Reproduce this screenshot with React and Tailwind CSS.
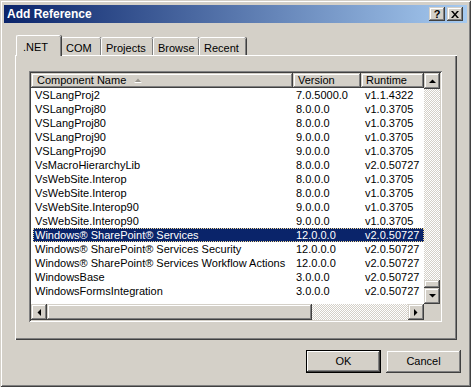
import React from "react";

const raised =
  "shadow-[inset_-1px_-1px_#404040,inset_1px_1px_#d4d0c8,inset_-2px_-2px_#808080,inset_2px_2px_#fff]";
const checker =
  "bg-[repeating-conic-gradient(#fff_0_25%,#d4d0c8_0_50%)] bg-[length:2px_2px]";

const rows = [
  ["VSLangProj2", "7.0.5000.0", "v1.1.4322"],
  ["VSLangProj80", "8.0.0.0", "v1.0.3705"],
  ["VSLangProj80", "8.0.0.0", "v1.0.3705"],
  ["VSLangProj90", "9.0.0.0", "v1.0.3705"],
  ["VSLangProj90", "9.0.0.0", "v1.0.3705"],
  ["VsMacroHierarchyLib", "8.0.0.0", "v2.0.50727"],
  ["VsWebSite.Interop", "8.0.0.0", "v1.0.3705"],
  ["VsWebSite.Interop", "8.0.0.0", "v1.0.3705"],
  ["VsWebSite.Interop90", "9.0.0.0", "v1.0.3705"],
  ["VsWebSite.Interop90", "9.0.0.0", "v1.0.3705"],
  ["Windows® SharePoint® Services", "12.0.0.0", "v2.0.50727"],
  ["Windows® SharePoint® Services Security", "12.0.0.0", "v2.0.50727"],
  ["Windows® SharePoint® Services Workflow Actions", "12.0.0.0", "v2.0.50727"],
  ["WindowsBase", "3.0.0.0", "v2.0.50727"],
  ["WindowsFormsIntegration", "3.0.0.0", "v2.0.50727"],
];

const tabs = [
  { label: ".NET", w: "w-[45px]", active: true },
  { label: "COM", w: "w-[40px]" },
  { label: "Projects", w: "w-[52px]" },
  { label: "Browse", w: "w-[46px]" },
  { label: "Recent", w: "w-[47px]" },
];

const Arrow = ({ dir }) => {
  const pts = {
    up: "0,4 3.5,0.5 7,4",
    down: "0,0 7,0 3.5,3.5",
    left: "4,0 4,7 0.5,3.5",
    right: "0,0 0,7 3.5,3.5",
  }[dir];
  const vert = dir === "up" || dir === "down";
  return (
    <svg width={vert ? 7 : 4} height={vert ? 4 : 7} viewBox={vert ? "0 0 7 4" : "0 0 4 7"}>
      <polygon points={pts} fill="#000" />
    </svg>
  );
};

const ScrollBtn = ({ dir, className = "" }) => (
  <div className={`w-[16px] h-[16px] shrink-0 bg-[#d4d0c8] flex items-center justify-center ${raised} ${className}`}>
    <Arrow dir={dir} />
  </div>
);

const AddReference = () => {
  return (
    <div className="w-[471px] h-[387px] bg-[#d4d0c8] p-[4px] font-['Liberation_Sans',Arial,sans-serif] text-[11px] text-black shadow-[inset_1px_1px_#d4d0c8,inset_-1px_-1px_#404040,inset_2px_2px_#fff,inset_-2px_-2px_#808080] overflow-hidden">
      {/* Title bar */}
      <div className="mt-[1px] h-[18px] flex items-center justify-between bg-[linear-gradient(to_right,#0a246a,#a6caf0)] pl-[3px] pr-[4px]">
        <span className="text-white font-bold text-[12px] leading-none">Add Reference</span>
        <div className="flex gap-[2px]">
          <div className={`w-[16px] h-[14px] bg-[#d4d0c8] flex items-center justify-center font-bold text-[11px] leading-none ${raised}`}>?</div>
          <div className={`w-[16px] h-[14px] bg-[#d4d0c8] flex items-center justify-center ${raised}`}>
            <svg width="8" height="7" viewBox="0 0 8 7">
              <path d="M0 0h2l2 2.5L6 0h2L5 3.5 8 7H6L4 4.5 2 7H0l3-3.5z" fill="#000" />
            </svg>
          </div>
        </div>
      </div>

      {/* Tabs */}
      <div className="mt-[12px] ml-[12px] flex items-end h-[20px]">
        {tabs.map((t) => (
          <div
            key={t.label}
            className={`${t.w} shrink-0 bg-[#d4d0c8] rounded-t-[2px] border-t border-l border-white shadow-[inset_-1px_0_#808080,1px_0_#404040] ${
              t.active
                ? "h-[21px] relative z-10 -mb-[1px] pl-[6px] pt-[3px]"
                : "h-[18px] pl-[4px] pt-[2px]"
            }`}
          >
            {t.label}
          </div>
        ))}
      </div>

      {/* Tab panel */}
      <div className="ml-[11px] w-[442px] h-[285px] pl-[14px] pt-[16px] shadow-[inset_1px_1px_#fff,inset_-1px_-1px_#404040,inset_-2px_-2px_#808080]">
        {/* List view */}
        <div className="w-[413px] h-[251px] bg-white p-[2px] shadow-[inset_1px_1px_#808080,inset_-1px_-1px_#fff,inset_2px_2px_#404040,inset_-2px_-2px_#d4d0c8] flex flex-col">
          <div className="flex flex-1 min-h-0">
            <div className="flex-1 flex flex-col">
              {/* Header */}
              <div className="flex h-[15px] shrink-0 leading-[13px]">
                <div className={`w-[262px] bg-[#d4d0c8] pl-[6px] flex items-center gap-[8px] ${raised}`}>
                  <span>Component Name</span>
                  <svg width="8" height="5" viewBox="0 0 8 5">
                    <polygon points="0.5,4.5 4,0.5 7.5,4.5" fill="#9a968e" />
                    <line x1="0.5" y1="4.5" x2="7.5" y2="4.5" stroke="#fff" strokeWidth="1" />
                  </svg>
                </div>
                <div className={`w-[68px] bg-[#d4d0c8] pl-[5px] flex items-center ${raised}`}>Version</div>
                <div className={`w-[63px] bg-[#d4d0c8] pl-[5px] flex items-center ${raised}`}>Runtime</div>
              </div>
              {/* Rows */}
              <div className="pl-[2px]">
                {rows.map(([name, ver, rt], i) => {
                  const sel = i === 10;
                  return (
                    <div
                      key={i}
                      className={`flex h-[14px] items-center whitespace-nowrap ${
                        sel ? "bg-[#0a246a] text-white outline outline-1 outline-dotted outline-[#f5db95] -outline-offset-1" : ""
                      }`}
                    >
                      <div className="w-[258px] pl-[2px] overflow-hidden">{name}</div>
                      <div className="w-[68px] pl-[5px]">{ver}</div>
                      <div className="w-[63px] pl-[6px]">{rt}</div>
                    </div>
                  );
                })}
              </div>
            </div>
            {/* Vertical scrollbar */}
            <div className={`w-[16px] flex flex-col ${checker}`}>
              <ScrollBtn dir="up" />
              <div className="flex-1" />
              <div className={`h-[8px] bg-[#d4d0c8] ${raised}`} />
              <ScrollBtn dir="down" />
            </div>
          </div>
          {/* Horizontal scrollbar */}
          <div className="flex h-[16px] shrink-0">
            <ScrollBtn dir="left" />
            <div className={`flex-1 flex ${checker}`}>
              <div className={`w-[265px] bg-[#d4d0c8] ${raised}`} />
            </div>
            <ScrollBtn dir="right" />
            <div className="w-[16px] bg-[#d4d0c8]" />
          </div>
        </div>
      </div>

      {/* Buttons */}
      <div className="mt-[10px] pr-[6px] flex justify-end gap-[5px]">
        <button className="w-[75px] h-[23px] bg-[#d4d0c8] border border-black shadow-[inset_-1px_-1px_#404040,inset_1px_1px_#fff,inset_-2px_-2px_#808080]">
          OK
        </button>
        <button className={`w-[75px] h-[23px] bg-[#d4d0c8] ${raised}`}>Cancel</button>
      </div>
    </div>
  );
};

export default AddReference;
